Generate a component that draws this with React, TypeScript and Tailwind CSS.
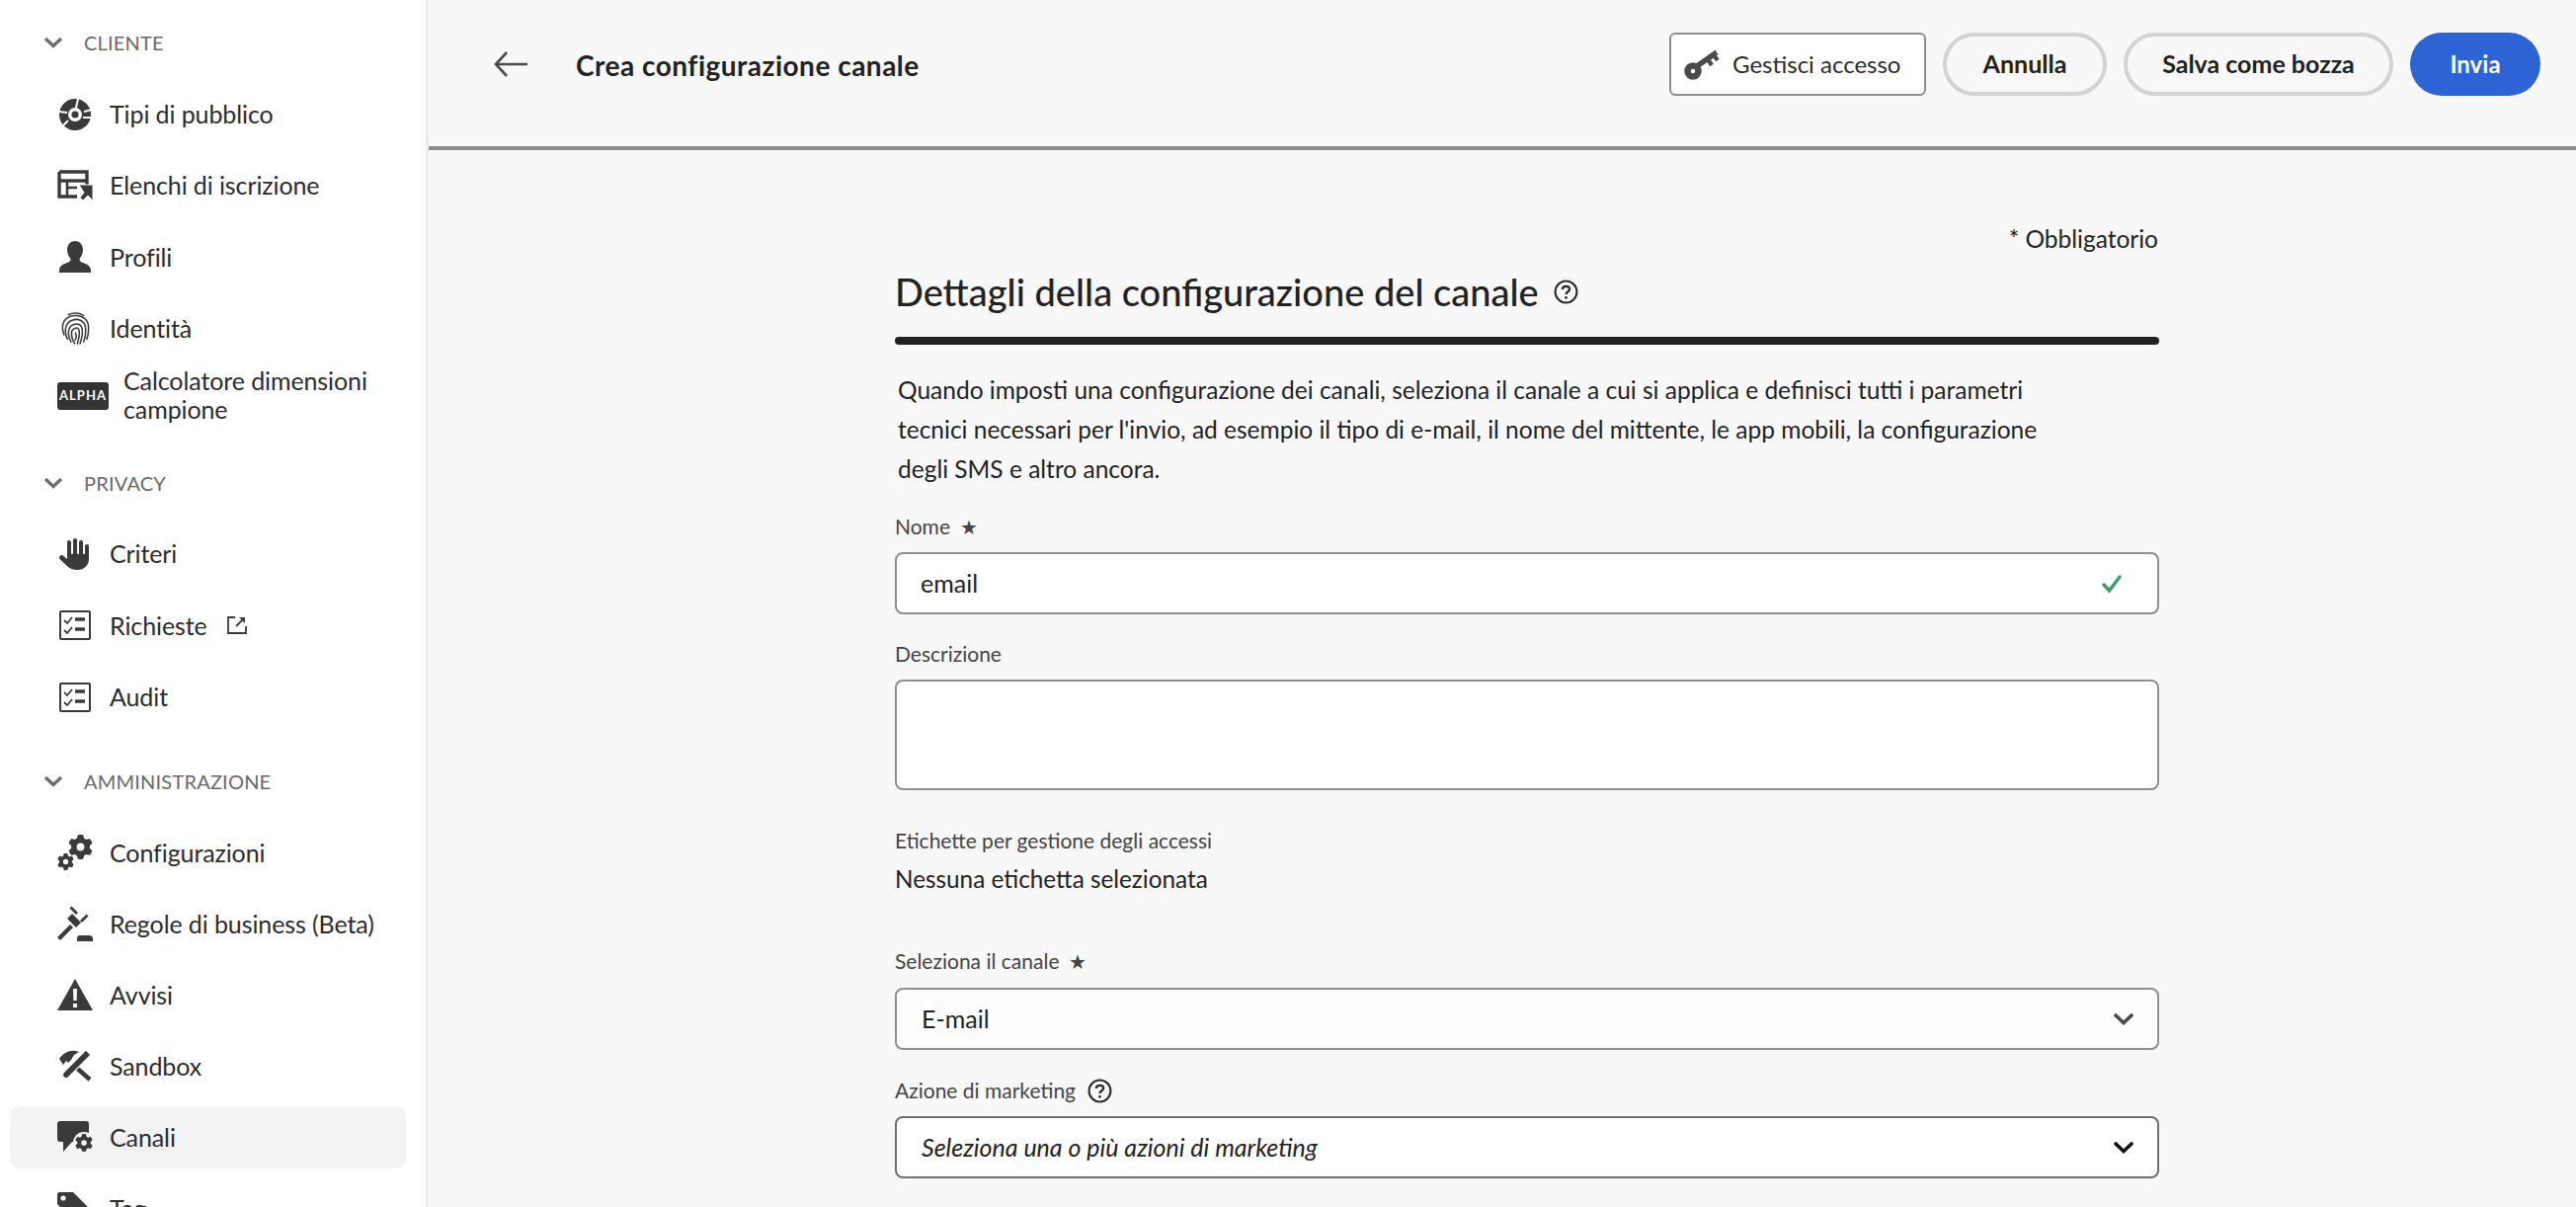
import type { ReactNode } from "react";
import { FaHand, FaGear } from "react-icons/fa6";

const font = "font-['Lato','Liberation_Sans',sans-serif]";

const IconTarget = () => (
  <svg viewBox="0 0 32 32" className="w-8 h-8" fill="none">
    <circle cx="16" cy="16" r="11.5" stroke="#3a3a3a" strokeWidth="9" />
    <circle cx="16" cy="16" r="3.6" fill="#3a3a3a" />
    <path d="M19 0 L17 9 M25 13 L33 11 M24 19 L33 19 M9 22 L2 29 M0 13 L8 14" stroke="#fff" strokeWidth="2" />
  </svg>
);

const IconList = () => (
  <svg viewBox="0 0 36 32" className="w-9 h-8" fill="none">
    <path d="M2 2 H30 V16 M20 27 H2 V2" stroke="#3a3a3a" strokeWidth="3.4" />
    <path d="M2 11 H30" stroke="#3a3a3a" strokeWidth="3.4" />
    <path d="M10 11 V27 M10 18 H20" stroke="#3a3a3a" strokeWidth="2.6" />
    <path d="M22 15 H36 V31 L31 26 L26 31 L23 28 L27 23 Z" fill="#3a3a3a" stroke="#fff" strokeWidth="1" />
  </svg>
);

const IconPerson = () => (
  <svg viewBox="0 0 32 32" className="w-8 h-8" fill="#3a3a3a">
    <path d="M16 0 C21 0 24 4 24 9 C24 13 22 16 20.5 18 C20.5 20 21 21 24 22 C28 23.5 32 25 32 30 V32 H0 V30 C0 25 4 23.5 8 22 C11 21 11.5 20 11.5 18 C10 16 8 13 8 9 C8 4 11 0 16 0 Z" />
  </svg>
);

const IconFingerprint = () => (
  <svg viewBox="0 0 32 36" className="w-[29px] h-[33px]" fill="none" stroke="#3a3a3a" strokeWidth="1.7" strokeLinecap="round">
    <path d="M8 2.5 C13 0.5 20 0.5 25 3.5" />
    <path d="M3 25 C0 17 1 8 10 4.5 C18 2 28 5 30 13 C31 19 30.5 25 28.5 30" />
    <path d="M7 30 C3 22 4 12 12 9 C19 6 26 10 27 16 C28 22 27 27 25 33" />
    <path d="M11 33 C6.5 25 7 16 14 13.5 C19 12 23 14 23.5 19 C24 23 23 29 21 35" />
    <path d="M15 35 C10.5 27 10 20 15 18 C18 16.5 20 18 20 21 C20.5 25 20 29 18 35" />
    <path d="M16 23 C17 26 17 29 15.5 31" />
  </svg>
);

const IconCheckList = () => (
  <svg viewBox="0 0 32 30" className="w-8 h-[30px]" fill="none">
    <rect x="1" y="1" width="30" height="28" stroke="#3a3a3a" strokeWidth="2" rx="1" />
    <path d="M5 10 L8 13 L13 7 M5 20 L8 23 L13 17" stroke="#3a3a3a" strokeWidth="1.8" />
    <path d="M16 9 H26 M16 19 H26" stroke="#3a3a3a" strokeWidth="3.4" />
  </svg>
);

const IconGears = () => (
  <div className="relative w-9 h-9">
    <FaGear className="absolute right-0 top-0 w-[25px] h-[25px] text-[#3a3a3a]" />
    <FaGear className="absolute left-0 bottom-0 w-[17px] h-[17px] text-[#3a3a3a]" />
  </div>
);

const IconGavel = () => (
  <svg viewBox="0 0 36 36" className="w-9 h-9" fill="#3a3a3a">
    <path d="M15 8 L24 17 L19 22 L10 13 Z" />
    <path d="M12.5 2.5 L14.5 0.5 L21 7 L19 9 Z M23 15 L25 17 L31.5 10.5 L29.5 8.5 Z" />
    <path d="M13 19 L16 22 L3 35 L0 32 Z" />
    <path d="M20 36 V33 C20 31 21 30 23 30 H32 C34 30 36 31 36 33 V36 Z" />
  </svg>
);

const IconAlert = () => (
  <svg viewBox="0 0 36 32" className="w-9 h-8">
    <path d="M18 0 L36 32 H0 Z" fill="#3a3a3a" />
    <path d="M16 10 H20 L19.6 22 H16.4 Z M16 25 H20 V29 H16 Z" fill="#fff" />
  </svg>
);

const IconSandbox = () => (
  <svg viewBox="0 0 34 32" className="w-[34px] h-8" fill="#3a3a3a">
    <path d="M1 9 C6 2 13 -1 21 2 L16 5 L13 10 L10 13 L8 11 L5 15 Z" />
    <path d="M14 14 L32 30" stroke="#3a3a3a" strokeWidth="4.4" />
    <path d="M28 0 L33 5 L10 28 L3 31 L5 23 Z" stroke="#fff" strokeWidth="1.2" />
    <path d="M5 26 L8 29 L3.5 30.5 Z" fill="#fff" />
  </svg>
);

const IconChannels = () => (
  <div className="relative w-9 h-8">
    <svg viewBox="0 0 32 32" className="absolute left-0 top-0 w-8 h-8" fill="#3a3a3a">
      <path d="M3 0 H29 C31 0 32 1 32 3 V18 C32 20 31 21 29 21 H15 L6 31 V21 H3 C1 21 0 20 0 18 V3 C0 1 1 0 3 0 Z" />
    </svg>
    <div className="absolute right-[-2px] bottom-[-1px] w-[22px] h-[22px] bg-[#f3f3f3] rounded-full flex items-center justify-center">
      <FaGear className="w-[18px] h-[18px] text-[#3a3a3a]" />
    </div>
  </div>
);

const IconTag = () => (
  <svg viewBox="0 0 36 32" className="w-9 h-8">
    <path d="M0 2 C0 1 1 0 2 0 H16 L34 18 L20 32 L0 12 Z" fill="#3a3a3a" />
    <circle cx="6" cy="6" r="2.6" fill="#fff" />
  </svg>
);

const IconKey = () => (
  <svg viewBox="0 0 37 31" className="w-[37px] h-[31px]" fill="none" stroke="#4a4a4a">
    <circle cx="9" cy="22" r="5.5" strokeWidth="6.5" />
    <path d="M13 17 L33 3" strokeWidth="5.5" />
    <path d="M24 10 L28 16 M30 6 L34 11" strokeWidth="4.4" />
  </svg>
);

const ExternalLink = () => (
  <svg viewBox="0 0 20 20" className="w-5 h-5 ml-5" fill="none" stroke="#3a3a3a" strokeWidth="1.8">
    <path d="M8 2 H1 V18 H19 V11" />
    <path d="M9 11 L17 3" />
    <path d="M12 2 L18 2 L18 8 Z" fill="#3a3a3a" stroke="none" />
  </svg>
);

const SectionTitle = ({ label, className }: { label: string; className: string }) => (
  <div className={`flex items-center h-[30px] pl-[44px] ${className}`}>
    <svg viewBox="0 0 20 12" className="w-5 h-3" fill="none" stroke="#6e6e6e" strokeWidth="3.4">
      <path d="M2 2 L10 9.5 L18 2" />
    </svg>
    <span className="ml-[21px] text-[20px] text-[#6a6a6a] tracking-[0.2px]">{label}</span>
  </div>
);

type NavItemProps = {
  icon: ReactNode;
  label: string;
  active?: boolean;
  extra?: ReactNode;
};

const NavItem = ({ icon, label, active, extra }: NavItemProps) => (
  <div className={`flex items-center h-[63px] ml-[10px] mr-[20px] pl-[48px] rounded-[10px] ${active ? "bg-[#f3f3f3]" : ""}`}>
    <div className="w-[36px] shrink-0 flex justify-center">{icon}</div>
    <span className="ml-[17px] text-[25px] tracking-[-0.1px] text-[#2c2c2c] whitespace-nowrap">{label}</span>
    {extra}
  </div>
);

const Sidebar = () => (
  <aside className="w-[434px] shrink-0 h-full bg-white border-r-[3px] border-[#ececec] overflow-hidden">
    <SectionTitle label="CLIENTE" className="mt-[28px] mb-[26px]" />
    <div className="flex flex-col gap-[9.4px]">
      <NavItem icon={<IconTarget />} label="Tipi di pubblico" />
      <NavItem icon={<IconList />} label="Elenchi di iscrizione" />
      <NavItem icon={<IconPerson />} label="Profili" />
      <NavItem icon={<IconFingerprint />} label="Identità" />
      <div className="flex items-center h-[63px] ml-[10px] pl-[48px] -mt-[5px]">
        <span className="w-[52px] h-[28px] mt-[2px] bg-[#333] rounded-[3px] text-white text-[13px] font-bold tracking-[1px] flex items-center justify-center">ALPHA</span>
        <span className="ml-[15px] text-[25px] leading-[29px] tracking-[-0.1px] text-[#2c2c2c]">
          Calcolatore dimensioni
          <br />
          campione
        </span>
      </div>
    </div>
    <SectionTitle label="PRIVACY" className="mt-[42px] mb-[26px]" />
    <div className="flex flex-col gap-[9.4px]">
      <NavItem icon={<FaHand className="w-8 h-8 text-[#3a3a3a]" />} label="Criteri" />
      <NavItem icon={<IconCheckList />} label="Richieste" extra={<ExternalLink />} />
      <NavItem icon={<IconCheckList />} label="Audit" />
    </div>
    <SectionTitle label="AMMINISTRAZIONE" className="mt-[39px] mb-[25.5px]" />
    <div className="flex flex-col gap-[9px]">
      <NavItem icon={<IconGears />} label="Configurazioni" />
      <NavItem icon={<IconGavel />} label="Regole di business (Beta)" />
      <NavItem icon={<IconAlert />} label="Avvisi" />
      <NavItem icon={<IconSandbox />} label="Sandbox" />
      <NavItem icon={<IconChannels />} label="Canali" active />
      <NavItem icon={<IconTag />} label="Tag" />
    </div>
  </aside>
);

const HelpIcon = ({ className }: { className: string }) => (
  <svg viewBox="0 0 24 24" className={className} fill="none" stroke="#2c2c2c" strokeWidth="2">
    <circle cx="12" cy="12" r="10.5" />
    <path d="M8.5 9.5 C8.5 7.5 10 6.5 12 6.5 C14 6.5 15.5 7.6 15.5 9.4 C15.5 11.8 12 11.8 12 14.5" strokeWidth="2.2" />
    <circle cx="12" cy="17.6" r="1.4" fill="#2c2c2c" stroke="none" />
  </svg>
);

const Chevron = ({ color }: { color: string }) => (
  <svg viewBox="0 0 20 14" className="w-5 h-[14px]" fill="none" stroke={color} strokeWidth="3.6" strokeLinecap="round">
    <path d="M2 3 L10 10.5 L18 3" />
  </svg>
);

const Star = () => <span className="ml-[10px] text-[#444] text-[20px]">★</span>;

const Label = ({ children, className }: { children: ReactNode; className: string }) => (
  <div className={`h-[30px] flex items-center text-[21px] text-[#444] ${className}`}>{children}</div>
);

const PillButton = ({ children, className }: { children: ReactNode; className: string }) => (
  <button className={`h-[64px] rounded-full border-[4px] border-[#d3d3d3] text-[25px] font-bold text-[#222] ${className}`}>
    {children}
  </button>
);

export default function App() {
  return (
    <div className={`flex w-[2608px] h-[1222px] overflow-hidden bg-[#f8f8f8] ${font}`}>
      <Sidebar />
      <main className="flex-1 min-w-0">
        <header className="h-[152px] border-b-[4px] border-[#8e8e8e] flex items-start">
          <svg viewBox="0 0 34 26" className="w-[34px] h-[26px] ml-[66px] mt-[52px]" fill="none" stroke="#4a4a4a" strokeWidth="2.6">
            <path d="M34 13 H2 M13 1 L2 13 L13 25" />
          </svg>
          <h1 className="ml-[49px] mt-[47px] text-[28px] leading-[38px] tracking-[0.5px] font-bold text-[#222]">Crea configurazione canale</h1>
          <div className="ml-auto mr-[36px] mt-[33px] flex items-center gap-[17px]">
            <button className="h-[64px] w-[260px] bg-white border-2 border-[#8e8e8e] rounded-[6px] flex items-center pl-[13px] text-[24px] text-[#2c2c2c]">
              <IconKey />
              <span className="ml-[12px]">Gestisci accesso</span>
            </button>
            <PillButton className="w-[166px]">Annulla</PillButton>
            <PillButton className="w-[273px]">Salva come bozza</PillButton>
            <button className="h-[64px] w-[132px] rounded-full bg-[#2c64d6] text-white text-[24px] font-bold">Invia</button>
          </div>
        </header>

        <section className="ml-[472px] w-[1280px] pt-[75px]">
          <div className="h-[30px] flex items-center justify-end pr-[1px] text-[24.5px] text-[#222]">* Obbligatorio</div>
          <div className="mt-[16px] h-[44px] flex items-center">
            <h2 className="text-[38px] font-medium text-[#222]">Dettagli della configurazione del canale</h2>
            <HelpIcon className="ml-[15px] w-[25px] h-[25px]" />
          </div>
          <div className="mt-[24px] h-2 rounded-full bg-[#222]" />
          <p className="mt-[26px] pl-[3px] text-[24.5px] leading-[40px] text-[#222]">
            Quando imposti una configurazione dei canali, seleziona il canale a cui si applica e definisci tutti i parametri
            <br />
            tecnici necessari per l'invio, ad esempio il tipo di e-mail, il nome del mittente, le app mobili, la configurazione
            <br />
            degli SMS e altro ancora.
          </p>

          <Label className="mt-[23px]">
            Nome
            <Star />
          </Label>
          <div className="mt-[11px] h-[63px] bg-white border-2 border-[#8e8e8e] rounded-[8px] flex items-center justify-between pl-[24px] pr-[36px]">
            <span className="text-[25px] text-[#222]">email</span>
            <svg viewBox="0 0 20 20" className="w-5 h-5" fill="none" stroke="#3f9e6d" strokeWidth="3.4" strokeLinecap="round">
              <path d="M2 11 L7.5 17 L18 3" />
            </svg>
          </div>

          <Label className="mt-[25px]">Descrizione</Label>
          <div className="mt-[11px] h-[112px] bg-white border-2 border-[#8e8e8e] rounded-[8px]" />

          <Label className="mt-[36px]">Etichette per gestione degli accessi</Label>
          <div className="mt-[9px] h-[30px] flex items-center text-[24.3px] text-[#222]">Nessuna etichetta selezionata</div>

          <Label className="mt-[53px]">
            Seleziona il canale
            <Star />
          </Label>
          <div className="mt-[12px] h-[63px] bg-[#fdfdfd] border-2 border-[#8e8e8e] rounded-[8px] flex items-center justify-between pl-[25px] pr-[24px]">
            <span className="text-[25px] text-[#222]">E-mail</span>
            <Chevron color="#4a4a4a" />
          </div>

          <Label className="mt-[26px]">
            Azione di marketing
            <HelpIcon className="ml-[12px] w-[25px] h-[25px]" />
          </Label>
          <div className="mt-[11px] h-[63px] bg-white border-2 border-[#6e6e6e] rounded-[8px] flex items-center justify-between pl-[25px] pr-[24px]">
            <span className="text-[25px] italic text-[#222]">Seleziona una o più azioni di marketing</span>
            <Chevron color="#111" />
          </div>
        </section>
      </main>
    </div>
  );
}
